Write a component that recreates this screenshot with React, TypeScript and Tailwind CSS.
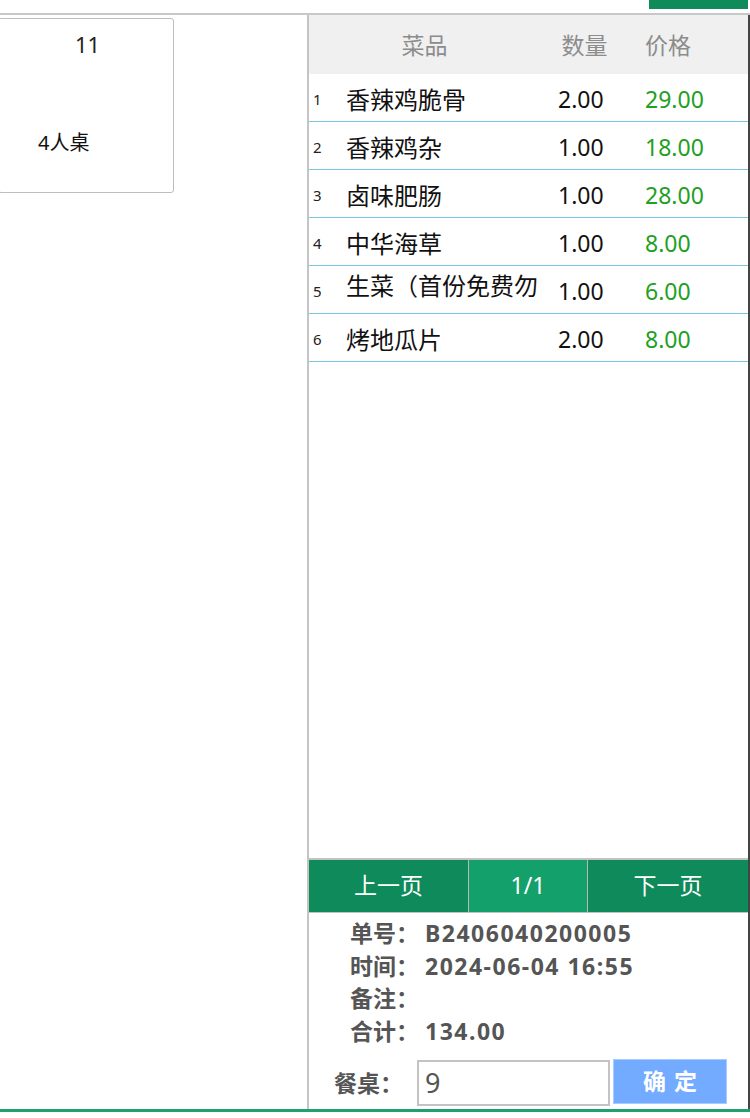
import React from "react";

const FONT = { fontFamily: '"Noto Sans", "Noto Sans CJK SC", sans-serif' };

const rows = [
  { no: 1, name: "香辣鸡脆骨", qty: "2.00", price: "29.00", wrap: false },
  { no: 2, name: "香辣鸡杂", qty: "1.00", price: "18.00", wrap: false },
  { no: 3, name: "卤味肥肠", qty: "1.00", price: "28.00", wrap: false },
  { no: 4, name: "中华海草", qty: "1.00", price: "8.00", wrap: false },
  { no: 5, name: "生菜（首份免费勿动）", qty: "1.00", price: "6.00", wrap: true },
  { no: 6, name: "烤地瓜片", qty: "2.00", price: "8.00", wrap: false },
];

export default function App() {
  return (
    <div className="w-[750px] h-[1118px] bg-white overflow-hidden flex flex-col" style={FONT}>
      <div className="h-[13px] flex justify-end">
        <div className="w-[99px] h-[9px] mr-[2px] bg-[#0f8a5a]" />
      </div>
      <div className="h-[1096px] flex border-t-2 border-[#c8c8c8]">
        <div className="w-[309px] border-r-2 border-[#c4c4c4] shrink-0">
          <div className="-ml-[2px] mt-[3px] w-[176px] h-[175px] border border-[#bdbdbd] rounded-[3px] flex flex-col">
            <div className="pt-[12px] text-center text-[22px] leading-[26px] text-[#222] pl-[3px]">11</div>
            <div className="mt-[74px] pl-[39px] text-[20px] leading-[24px] text-[#111]">4人桌</div>
          </div>
        </div>
        <div className="flex-1 flex flex-col border-r-2 border-[#444]">
          <div className="h-[59px] shrink-0 bg-[#f0f0f0] flex items-center pt-[2px] text-[23px] text-[#8c8c8c]">
            <div className="w-[231px] text-center">菜品</div>
            <div className="w-[89px] text-center">数量</div>
            <div className="pl-[16px]">价格</div>
          </div>
          <div className="flex flex-col">
            {rows.map((r) => (
              <div key={r.no} className="h-[48px] border-b-[1.5px] border-[#7cc6e6] flex items-center pt-[4px]">
                <div className="w-[37px] pl-[4px] text-[15px] text-[#222]">{r.no}</div>
                <div
                  className={
                    r.wrap
                      ? "w-[212px] text-[24px] text-[#111] whitespace-nowrap overflow-hidden mb-[12px] pr-[18px]"
                      : "w-[212px] text-[24px] text-[#111] whitespace-nowrap overflow-hidden"
                  }
                >
                  {r.wrap ? "生菜（首份免费勿" : r.name}
                </div>
                <div className="w-[87px] text-[23px] text-[#111]">{r.qty}</div>
                <div className="text-[23px] text-[#22a022]">{r.price}</div>
              </div>
            ))}
          </div>
          <div className="flex-1" />
          <div className="h-[55px] shrink-0 flex border-t-2 border-b border-[#c2c2c2] text-white text-[23px]">
            <div className="w-[160px] bg-[#0f8a5a] border-r border-[#b8b8b8] flex items-center justify-center pb-[2px]">上一页</div>
            <div className="w-[119px] bg-[#13a06b] border-r border-[#b8b8b8] flex items-center justify-center pb-[2px]">1/1</div>
            <div className="flex-1 bg-[#0f8a5a] flex items-center justify-center pb-[2px]">下一页</div>
          </div>
          <div className="h-[196px] shrink-0 flex flex-col pt-[4px]">
            <div className="pl-[41px] text-[23px] leading-[32.5px] font-bold text-[#555]">
              <div className="flex">
                <span className="w-[75px]">单号：</span>
                <span className="tracking-[1.5px]">B2406040200005</span>
              </div>
              <div className="flex">
                <span className="w-[75px]">时间：</span>
                <span className="tracking-[1.5px]">2024-06-04 16:55</span>
              </div>
              <div className="flex">
                <span className="w-[75px]">备注：</span>
              </div>
              <div className="flex">
                <span className="w-[75px]">合计：</span>
                <span className="tracking-[1.5px]">134.00</span>
              </div>
            </div>
            <div className="mt-[13px] flex items-start">
              <div className="w-[108px] pl-[25px] h-[46px] flex items-center text-[23px] font-bold text-[#555]">餐桌：</div>
              <div className="w-[193px] h-[46px] border-2 border-[#c3c3c3] flex items-center pl-[6px] text-[27px] text-[#555]">9</div>
              <div className="ml-[3px] -mt-[1px] w-[114px] h-[45px] bg-[#72abff] border border-[#a9ccff] flex items-center justify-center text-white font-bold text-[23px] tracking-[8px] pl-[8px]">
                确定
              </div>
            </div>
          </div>
        </div>
      </div>
      <div className="h-[3px] bg-[#1fa06e]" />
    </div>
  );
}
